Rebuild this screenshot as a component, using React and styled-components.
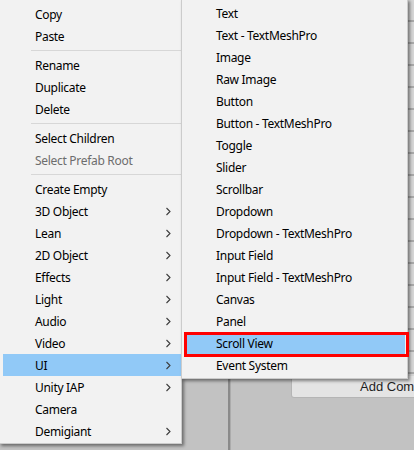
import React from "react";
import styled, { createGlobalStyle } from "styled-components";

const GlobalStyle = createGlobalStyle`
  html, body { margin: 0; padding: 0; background: #c2c2c2; overflow: hidden; }
  * { box-sizing: border-box; }
`;

const Stage = styled.div`
  position: relative;
  width: 414px;
  height: 450px;
  overflow: hidden;
  background: #c2c2c2;
  font-family: "Segoe UI", "Noto Sans", "Open Sans", sans-serif;
`;

const Editor = styled.div`
  display: flex;
  height: 450px;
`;

const SceneArea = styled.div`
  flex: 0 0 228px;
  background: #c2c2c2;
`;

const Divider = styled.div`
  flex: 0 0 2px;
  background: #8a8a8a;
`;

const Inspector = styled.div`
  flex: 1;
  min-width: 0;
  display: flex;
  flex-direction: column;
  overflow: hidden;
  border-left: 1px solid #ababab;
`;

const InspectorRows = styled.div`
  height: 376px;
  background: repeating-linear-gradient(
    to bottom,
    #d6d6d6 0px,
    #d6d6d6 20px,
    #a9a9a9 20px,
    #a9a9a9 22px
  );
`;

const ButtonRow = styled.div`
  display: flex;
  padding-left: 60px;
`;

const AddButton = styled.div`
  flex: 0 0 240px;
  height: 22px;
  background: #e4e4e4;
  border: 1px solid #b5b5b5;
  border-top: none;
  border-radius: 0 0 3px 3px;
  padding-left: 68px;
  font-family: "Liberation Sans", Arial, sans-serif;
  font-size: 13px;
  line-height: 21px;
  color: #1e1e1e;
  white-space: nowrap;
`;

const Menu = styled.div`
  position: absolute;
  top: ${(p) => p.$top}px;
  left: ${(p) => p.$left}px;
  width: ${(p) => p.$width}px;
  background: #f2f2f2;
  border: 1px solid #cccccc;
  padding: ${(p) => p.$pad};
  box-shadow: 2px 2px 3px rgba(0, 0, 0, 0.45);
  display: flex;
  flex-direction: column;
`;

const Row = styled.div`
  position: relative;
  height: 22px;
  display: flex;
  align-items: center;
  padding-left: 32px;
  padding-right: 8px;
  font-size: 12px;
  letter-spacing: -0.3px;
  color: ${(p) => (p.$disabled ? "#6d6d6d" : "#000")};
  background: ${(p) => (p.$active ? "#91c9f7" : "transparent")};
  white-space: nowrap;
`;

const Label = styled.span`
  flex: 1;
`;

const Chevron = styled.svg`
  width: 6px;
  height: 9px;
  margin-right: 2px;
`;

const Separator = styled.div`
  height: 7px;
  display: flex;
  align-items: center;
  padding-left: 28px;
  &::after {
    content: "";
    flex: 1;
    height: 1px;
    background: #d7d7d7;
  }
`;

const Annotation = styled.div`
  position: absolute;
  top: 0;
  left: 0;
  right: -4px;
  bottom: -3px;
  border: 3px solid #ff0000;
  pointer-events: none;
`;

const mainItems = [
  { label: "Copy" },
  { label: "Paste" },
  { sep: true },
  { label: "Rename" },
  { label: "Duplicate" },
  { label: "Delete" },
  { sep: true },
  { label: "Select Children" },
  { label: "Select Prefab Root", disabled: true },
  { sep: true },
  { label: "Create Empty" },
  { label: "3D Object", arrow: true },
  { label: "Lean", arrow: true },
  { label: "2D Object", arrow: true },
  { label: "Effects", arrow: true },
  { label: "Light", arrow: true },
  { label: "Audio", arrow: true },
  { label: "Video", arrow: true },
  { label: "UI", arrow: true, active: true },
  { label: "Unity IAP", arrow: true },
  { label: "Camera" },
  { label: "Demigiant", arrow: true },
];

const subItems = [
  "Text",
  "Text - TextMeshPro",
  "Image",
  "Raw Image",
  "Button",
  "Button - TextMeshPro",
  "Toggle",
  "Slider",
  "Scrollbar",
  "Dropdown",
  "Dropdown - TextMeshPro",
  "Input Field",
  "Input Field - TextMeshPro",
  "Canvas",
  "Panel",
  "Scroll View",
  "Event System",
];

const Arrow = () => (
  <Chevron viewBox="0 0 6 9">
    <path d="M1.5 1 L5 4.5 L1.5 8" fill="none" stroke="#3c3c3c" strokeWidth="1.1" />
  </Chevron>
);

export default function App() {
  return (
    <Stage>
      <GlobalStyle />
      <Editor>
        <SceneArea />
        <Divider />
        <Inspector>
          <InspectorRows />
          <ButtonRow>
            <AddButton>Add Component</AddButton>
          </ButtonRow>
        </Inspector>
      </Editor>

      <Menu $top={-1} $left={-1} $width={183} $pad="3px 0 1px 3px">
        {mainItems.map((it, i) =>
          it.sep ? (
            <Separator key={i} />
          ) : (
            <Row key={i} $active={it.active} $disabled={it.disabled}>
              <Label>{it.label}</Label>
              {it.arrow && <Arrow />}
            </Row>
          )
        )}
      </Menu>

      <Menu $top={-1} $left={181} $width={227} $pad="2px 2px 2px 2px">
        {subItems.map((label) => (
          <Row key={label} $active={label === "Scroll View"}>
            <Label>{label}</Label>
            {label === "Scroll View" && <Annotation />}
          </Row>
        ))}
      </Menu>
    </Stage>
  );
}
